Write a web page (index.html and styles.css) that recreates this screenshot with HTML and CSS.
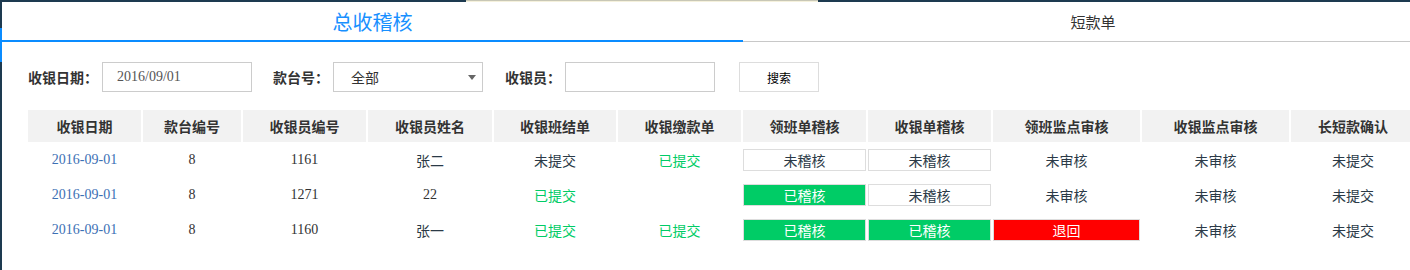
FILE: index.html
```html
<!DOCTYPE html>
<html lang="zh-CN">
<head>
    <meta charset="UTF-8">
    <meta name="viewport" content="width=device-width, initial-scale=1.0">
    <title>总收稽核</title>
    <link rel="stylesheet" href="styles.css">
</head>
<body>
    <div class="topbar"><span class="topbar-tab"></span></div>

    <div class="page">
        <div class="tabs">
            <a class="tab tab-active">总收稽核</a>
            <a class="tab">短款单</a>
        </div>

        <form class="filter">
            <label class="filter-label">收银日期：</label>
            <input type="text" class="filter-input date-input" value="2016/09/01">

            <label class="filter-label">款台号：</label>
            <div class="select-box">
                <select class="filter-select">
                    <option>全部</option>
                </select>
            </div>

            <label class="filter-label">收银员：</label>
            <input type="text" class="filter-input">

            <button type="button" class="search-btn">搜索</button>
        </form>

        <table class="audit-table">
            <colgroup>
                <col class="c-date">
                <col class="c-desk">
                <col class="c-no">
                <col class="c-name">
                <col class="c-std">
                <col class="c-std2">
                <col class="c-std2">
                <col class="c-std2">
                <col class="c-wide">
                <col class="c-wide">
                <col class="c-last">
            </colgroup>
            <thead>
                <tr>
                    <th>收银日期</th>
                    <th>款台编号</th>
                    <th>收银员编号</th>
                    <th>收银员姓名</th>
                    <th>收银班结单</th>
                    <th>收银缴款单</th>
                    <th>领班单稽核</th>
                    <th>收银单稽核</th>
                    <th>领班监点审核</th>
                    <th>收银监点审核</th>
                    <th>长短款确认</th>
                </tr>
            </thead>
            <tbody>
                <tr>
                    <td class="date">2016-09-01</td>
                    <td class="num">8</td>
                    <td class="num">1161</td>
                    <td>张二</td>
                    <td>未提交</td>
                    <td class="done">已提交</td>
                    <td><span class="badge">未稽核</span></td>
                    <td><span class="badge">未稽核</span></td>
                    <td>未审核</td>
                    <td>未审核</td>
                    <td>未提交</td>
                </tr>
                <tr>
                    <td class="date">2016-09-01</td>
                    <td class="num">8</td>
                    <td class="num">1271</td>
                    <td class="num">22</td>
                    <td class="done">已提交</td>
                    <td></td>
                    <td><span class="badge badge-ok">已稽核</span></td>
                    <td><span class="badge">未稽核</span></td>
                    <td>未审核</td>
                    <td>未审核</td>
                    <td>未提交</td>
                </tr>
                <tr>
                    <td class="date">2016-09-01</td>
                    <td class="num">8</td>
                    <td class="num">1160</td>
                    <td>张一</td>
                    <td class="done">已提交</td>
                    <td class="done">已提交</td>
                    <td><span class="badge badge-ok">已稽核</span></td>
                    <td><span class="badge badge-ok">已稽核</span></td>
                    <td><span class="badge badge-back">退回</span></td>
                    <td>未审核</td>
                    <td>未提交</td>
                </tr>
            </tbody>
        </table>
    </div>
</body>
</html>
```

FILE: styles.css
```css
body {
    margin: 0;
    width: 1410px;
    height: 270px;
    overflow: hidden;
    background: #fff;
    font-family: "Noto Sans CJK SC", sans-serif;
    color: #333;
}

.topbar {
    height: 2px;
    background: #1d3a50;
}

.topbar-tab {
    display: block;
    margin-left: 466px;
    width: 352px;
    height: 1px;
    border-top: 1px solid #c8c7b6;
    background: #f5f1dc;
}

.page {
    position: relative;
    border-left: 2px solid #1d3a50;
    height: 268px;
}

/* 左侧滚动条高亮 */
.page::before {
    content: "";
    position: absolute;
    left: -2px;
    top: 26px;
    width: 2px;
    height: 34px;
    background: #0a8cff;
}

.tabs {
    display: flex;
}

.tab {
    flex: none;
    box-sizing: border-box;
    height: 40px;
    text-align: center;
    cursor: pointer;
}

.tab-active {
    width: 741px;
    padding-top: 2px;
    line-height: 36px;
    font-size: 20px;
    color: #1890ff;
    border-bottom: 2px solid #0a8cff;
}

.tabs .tab:not(.tab-active) {
    width: 700px;
    line-height: 39px;
    font-size: 15px;
    color: #333;
    border-bottom: 1px solid #c8c8c8;
}

.filter {
    display: flex;
    align-items: center;
    margin: 20px 0 0;
    padding-left: 26px;
    height: 30px;
}

.filter-label {
    font-size: 14px;
    font-weight: bold;
    color: #333;
    margin-right: 4px;
}

.filter-input {
    box-sizing: border-box;
    width: 150px;
    height: 30px;
    margin: 0 22px 0 0;
    padding: 0 14px;
    border: 1px solid #ccc;
    font-family: "Liberation Serif", serif;
    font-size: 14px;
    color: #555;
    outline: none;
}

.date-input {
    margin-right: 21px;
}

.select-box {
    position: relative;
    width: 150px;
    height: 30px;
    margin-right: 22px;
}

.select-box::after {
    content: "";
    position: absolute;
    right: 7px;
    top: 13px;
    border-left: 4px solid transparent;
    border-right: 4px solid transparent;
    border-top: 5px solid #666;
}

.filter-select {
    appearance: none;
    -webkit-appearance: none;
    box-sizing: border-box;
    width: 150px;
    height: 30px;
    padding: 0 0 0 17px;
    border: 1px solid #ccc;
    border-radius: 0;
    background: #fff;
    font-family: "Noto Sans CJK SC", sans-serif;
    font-size: 14px;
    color: #333;
    outline: none;
}

.search-btn {
    box-sizing: border-box;
    width: 80px;
    height: 30px;
    margin-left: 2px;
    border: 1px solid #ddd;
    background: #fff;
    font-family: "Noto Sans CJK SC", sans-serif;
    font-size: 12px;
    color: #000;
    cursor: pointer;
}

.audit-table {
    table-layout: fixed;
    width: 1388px;
    margin: 18px 0 0 24px;
    border-collapse: separate;
    border-spacing: 2px 0;
    font-size: 14px;
}

.c-date { width: 113px; }
.c-desk { width: 98px; }
.c-no { width: 123px; }
.c-name { width: 124px; }
.c-std { width: 122px; }
.c-std2 { width: 123px; }
.c-wide { width: 147px; }
.c-last { width: 124px; }

.audit-table th {
    height: 32px;
    padding: 0;
    background: #f2f2f2;
    font-weight: bold;
    color: #333;
    text-align: center;
}

.audit-table td {
    height: 35px;
    padding: 0;
    text-align: center;
    color: #2b3a47;
}

.audit-table td.num {
    font-family: "Liberation Serif", serif;
    color: #333;
}

.audit-table td.date {
    font-family: "Liberation Serif", serif;
    color: #3c70b4;
}

.audit-table td.done {
    color: #00cc66;
}

.badge {
    display: block;
    box-sizing: border-box;
    height: 22px;
    line-height: 20px;
    border: 1px solid #ddd;
    background: #fff;
}

.badge-ok {
    background: #00cc66;
    color: #fff;
}

.badge-back {
    background: #ff0000;
    color: #fff;
}
```
